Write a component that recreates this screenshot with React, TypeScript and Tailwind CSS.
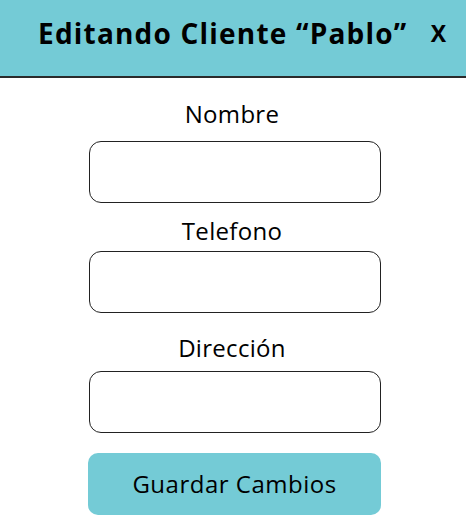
import React from 'react';

const Field = ({ label, labelClass, inputClass }: { label: string; labelClass: string; inputClass: string }) => (
  <>
    <label className={`block text-center text-[24px] leading-[30px] tracking-[0.3px] text-black ${labelClass}`}>{label}</label>
    <input
      type="text"
      className={`block w-[292px] h-[62px] ml-[89px] rounded-[12px] border-[1.5px] border-[#222] bg-white outline-none ${inputClass}`}
    />
  </>
);

const App = () => {
  return (
    <div className="w-[466px] h-[527px] bg-white" style={{ fontFamily: '"Open Sans", "Noto Sans", sans-serif' }}>
      <header className="h-[78px] bg-[#74cbd6] border-b-2 border-[#2b2b2b] flex items-start pt-[14px] pl-[38px] pr-[20px]">
        <h1 className="text-[28px] leading-[38px] tracking-[1.2px] font-bold text-black">Editando Cliente “Pablo”</h1>
        <button className="ml-auto text-[23px] leading-[38px] font-bold text-black">X</button>
      </header>
      <main className="pt-[21px] pr-[2px]">
        <Field label="Nombre" labelClass="" inputClass="mt-[12px]" />
        <Field label="Telefono" labelClass="mt-[13px]" inputClass="mt-[5px]" />
        <Field label="Dirección" labelClass="mt-[20px]" inputClass="mt-[8px]" />
        <button className="block w-[293px] h-[62px] ml-[88px] mt-[20px] rounded-[10px] bg-[#74cbd6] text-[24px] tracking-[0.5px] text-black">
          Guardar Cambios
        </button>
      </main>
    </div>
  );
};

export default App;
